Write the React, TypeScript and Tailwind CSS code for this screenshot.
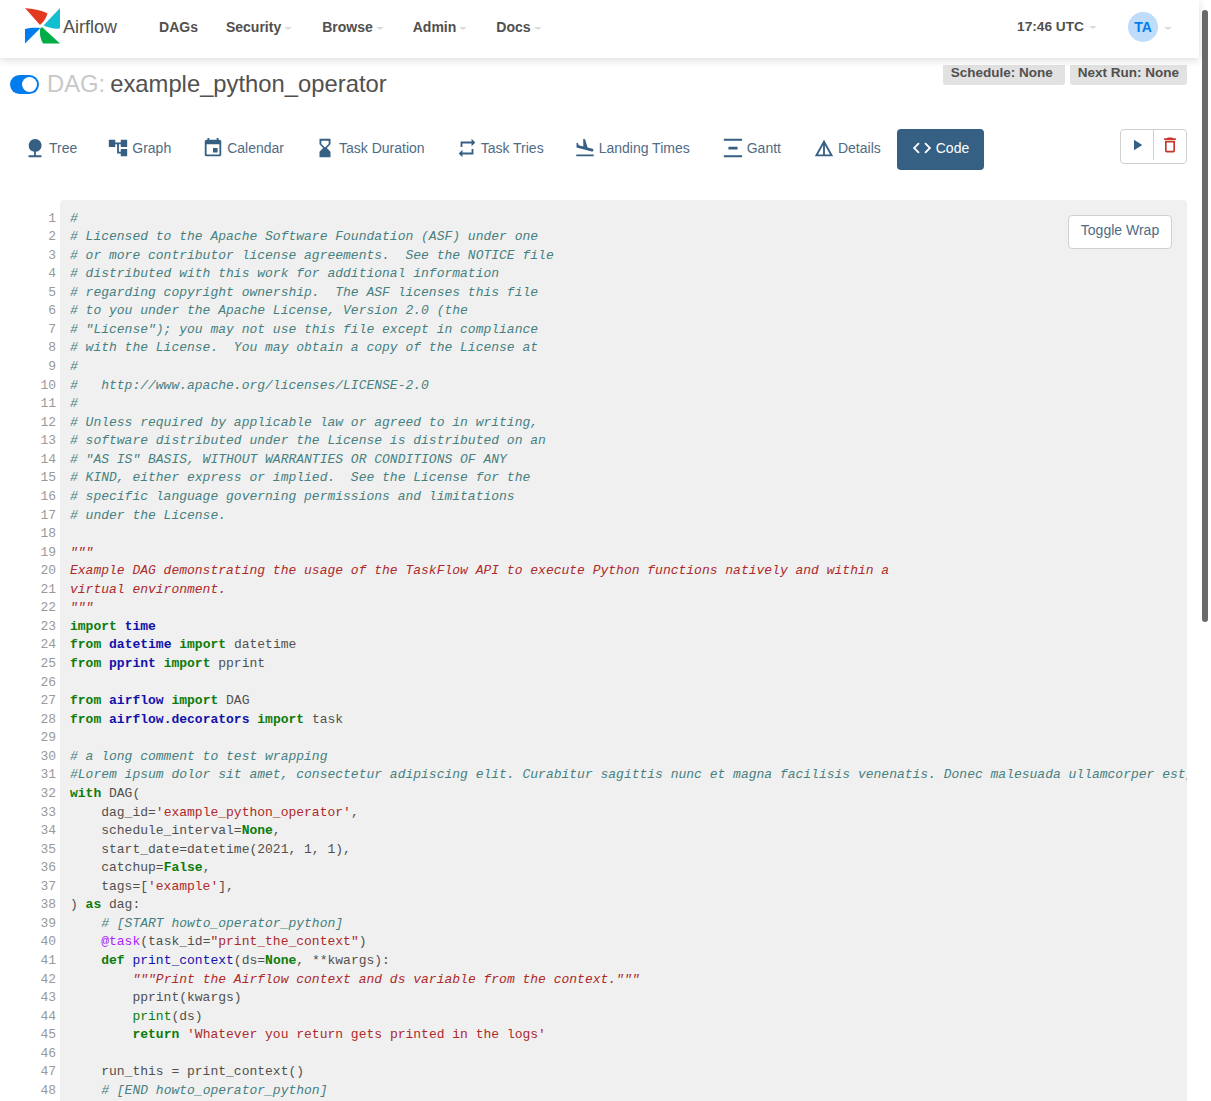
import type { ReactNode } from 'react';
import {
  MdAccountTree,
  MdCode,
  MdDeleteOutline,
  MdDetails,
  MdEvent,
  MdFlightLand,
  MdHourglassBottom,
  MdNature,
  MdPlayArrow,
  MdRepeat,
} from 'react-icons/md';

type Kind = 'c' | 'k' | 'n' | 's' | 'd' | 'f' | 'b' | 'a' | 't';
type Token = [Kind, string];

const tokenClass: Record<Kind, string> = {
  c: 'italic text-[#468080]',
  k: 'font-bold text-[#0c7c0c]',
  n: 'font-bold text-[#1111aa]',
  s: 'text-[#ad2a2a]',
  d: 'italic text-[#ad2a2a]',
  f: 'text-[#1111aa]',
  b: 'text-[#0c7c0c]',
  a: 'text-[#aa22ff]',
  t: 'text-[#51504f]',
};

const comment = (s: string): Token[] => [['c', s]];

const lines: Token[][] = [
  comment('#'),
  comment('# Licensed to the Apache Software Foundation (ASF) under one'),
  comment('# or more contributor license agreements.  See the NOTICE file'),
  comment('# distributed with this work for additional information'),
  comment('# regarding copyright ownership.  The ASF licenses this file'),
  comment('# to you under the Apache License, Version 2.0 (the'),
  comment('# "License"); you may not use this file except in compliance'),
  comment('# with the License.  You may obtain a copy of the License at'),
  comment('#'),
  comment('#   http://www.apache.org/licenses/LICENSE-2.0'),
  comment('#'),
  comment('# Unless required by applicable law or agreed to in writing,'),
  comment('# software distributed under the License is distributed on an'),
  comment('# "AS IS" BASIS, WITHOUT WARRANTIES OR CONDITIONS OF ANY'),
  comment('# KIND, either express or implied.  See the License for the'),
  comment('# specific language governing permissions and limitations'),
  comment('# under the License.'),
  [],
  [['d', '"""']],
  [['d', 'Example DAG demonstrating the usage of the TaskFlow API to execute Python functions natively and within a']],
  [['d', 'virtual environment.']],
  [['d', '"""']],
  [['k', 'import'], ['t', ' '], ['n', 'time']],
  [['k', 'from'], ['t', ' '], ['n', 'datetime'], ['t', ' '], ['k', 'import'], ['t', ' datetime']],
  [['k', 'from'], ['t', ' '], ['n', 'pprint'], ['t', ' '], ['k', 'import'], ['t', ' pprint']],
  [],
  [['k', 'from'], ['t', ' '], ['n', 'airflow'], ['t', ' '], ['k', 'import'], ['t', ' DAG']],
  [['k', 'from'], ['t', ' '], ['n', 'airflow.decorators'], ['t', ' '], ['k', 'import'], ['t', ' task']],
  [],
  comment('# a long comment to test wrapping'),
  comment('#Lorem ipsum dolor sit amet, consectetur adipiscing elit. Curabitur sagittis nunc et magna facilisis venenatis. Donec malesuada ullamcorper est,'),
  [['k', 'with'], ['t', ' DAG(']],
  [['t', '    dag_id='], ['s', "'example_python_operator'"], ['t', ',']],
  [['t', '    schedule_interval='], ['k', 'None'], ['t', ',']],
  [['t', '    start_date=datetime(2021, 1, 1),']],
  [['t', '    catchup='], ['k', 'False'], ['t', ',']],
  [['t', '    tags=['], ['s', "'example'"], ['t', '],']],
  [['t', ') '], ['k', 'as'], ['t', ' dag:']],
  [['t', '    '], ['c', '# [START howto_operator_python]']],
  [['t', '    '], ['a', '@task'], ['t', '(task_id='], ['s', '"print_the_context"'], ['t', ')']],
  [['t', '    '], ['k', 'def'], ['t', ' '], ['f', 'print_context'], ['t', '(ds='], ['k', 'None'], ['t', ', **kwargs):']],
  [['t', '        '], ['d', '"""Print the Airflow context and ds variable from the context."""']],
  [['t', '        pprint(kwargs)']],
  [['t', '        '], ['b', 'print'], ['t', '(ds)']],
  [['t', '        '], ['k', 'return'], ['t', ' '], ['s', "'Whatever you return gets printed in the logs'"]],
  [],
  [['t', '    run_this = print_context()']],
  [['t', '    '], ['c', '# [END howto_operator_python]']],
];

function Caret() {
  return <span className="ml-[3px] mt-[2px] inline-block h-0 w-0 border-x-[4px] border-t-[3px] border-x-transparent border-t-[#dcdcdc]" />;
}

// pinwheel, coordinates are the page's own
function Logo() {
  return (
    <svg width="40" height="38" viewBox="23 8 40 38" className="shrink-0">
      <path d="M25 8C33 9 41 10 47.500 13.500C46 18 44 21.500 41 24L40 25Z" fill="#e43921" />
      <path d="M60 8V28.500C54 29 49 28 43.500 25.500Z" fill="#11bfd0" />
      <path d="M60 43.500H43C40.500 39 39.500 35 40 29L42 27Z" fill="#00ad46" />
      <path d="M25 43.500V29C30 27.500 35 27.500 40 28L41.500 27Z" fill="#017cee" />
    </svg>
  );
}

function NavItem({ label, className, caret = true }: { label: string; className: string; caret?: boolean }) {
  return (
    <div className={`flex items-center text-[14px] font-bold text-[#51504f] ${className}`}>
      {label}
      {caret && <Caret />}
    </div>
  );
}

function Badge({ children, className = 'pr-2' }: { children: ReactNode; className?: string }) {
  return <span className={`flex h-5 items-start rounded-b-[3px] bg-[#e2e2e2] pl-2 text-[13.500px] font-bold leading-[15px] text-[#51504f] ${className}`}>{children}</span>;
}

function Tab({ icon, label, active, className = '' }: { icon: ReactNode; label: string; active?: boolean; className?: string }) {
  return (
    <div
      className={`flex h-[41px] items-center gap-[5px] rounded-[4px] px-[15px] pb-[3px] text-[14px] ${
        active ? 'bg-[#365f84] text-white' : 'text-[#4f6b85]'
      } ${className}`}
    >
      <span className={`-mx-[2px] flex w-[22px] justify-center text-[22px] ${active ? 'text-white' : 'text-[#365f84]'}`}>{icon}</span>
      {label}
    </div>
  );
}

export default function App() {
  return (
    <div className="flex h-[1101px] overflow-hidden bg-white font-['Liberation_Sans',sans-serif]">
      <div className="min-w-0 flex-1">
        <nav className="relative z-10 flex h-[58px] items-center bg-white pb-1 pl-[23px] pr-[27px] shadow-[0_2px_8px_rgba(0,0,0,0.14)]">
          <Logo />
          <span className="text-[18px] text-[#51504f]">Airflow</span>
          <NavItem label="DAGs" caret={false} className="ml-[42px]" />
          <NavItem label="Security" className="ml-[28px]" />
          <NavItem label="Browse" className="ml-[30px]" />
          <NavItem label="Admin" className="ml-[29px]" />
          <NavItem label="Docs" className="ml-[29px]" />
          <div className="ml-auto flex items-center">
            <div className="mr-[31px] flex items-center text-[13.700px] font-bold text-[#51504f]">
              17:46 UTC
              <span className="ml-[2px] flex"><Caret /></span>
            </div>
            <span className="flex h-[30px] w-[30px] items-center justify-center rounded-full bg-[#bfdcfa] text-[14px] font-bold text-[#017cee]">TA</span>
            <span className="ml-[3px] flex items-center"><Caret /></span>
          </div>
        </nav>

        <div className="flex h-[71px] items-start justify-between pl-[10px] pr-3">
          <h3 className="mt-[11px] flex items-center text-[23.800px] leading-[30px] text-[#51504f]">
            <span className="mr-2 flex h-[19px] w-[29px] items-center justify-end rounded-full bg-[#017cee] pr-[2px]">
              <span className="h-[15px] w-[15px] rounded-full bg-white" />
            </span>
            <span className="mr-[5px] text-[#c8c8c8]">DAG:</span>
            example_python_operator
          </h3>
          <div className="mt-[7px] flex gap-[5px]">
            <Badge className="pr-3">Schedule: None</Badge>
            <Badge>Next Run: None</Badge>
          </div>
        </div>

        <div className="flex items-start pl-[11px] pr-3">
          <div className="flex gap-[2px]">
            <Tab icon={<MdNature />} label="Tree" />
            <Tab icon={<MdAccountTree />} label="Graph" />
            <Tab icon={<MdEvent />} label="Calendar" className="ml-[1px]" />
            <Tab icon={<MdHourglassBottom />} label="Task Duration" />
            <Tab icon={<MdRepeat />} label="Task Tries" className="ml-[1px]" />
            <Tab icon={<MdFlightLand />} label="Landing Times" />
            <Tab
              icon={
                <svg width="22" height="22" viewBox="0 0 24 24" fill="currentColor">
                  <path d="M22 2v2H2V2h20zM7 10.500v3h10v-3H7zM2 20v2h20v-2H2z" />
                </svg>
              }
              label="Gantt"
              className="ml-[2px]"
            />
            <Tab icon={<MdDetails />} label="Details" className="ml-[2px]" />
            <Tab icon={<MdCode />} label="Code" active className="-ml-[1px] pl-[16px]" />
          </div>
          <div className="ml-auto flex h-[35px] rounded-[4px] border border-[#cfcfcf] pb-[3px]">
            <span className="flex w-[33px] items-center justify-center border-r border-[#cfcfcf] text-[18px] text-[#365f84]"><MdPlayArrow /></span>
            <span className="flex w-[32px] items-center justify-center text-[20px] text-[#c9362b]"><MdDeleteOutline /></span>
          </div>
        </div>

        <div className="mt-[30px] flex pr-3">
          <div className="w-[56px] shrink-0 pt-[9.500px] text-right font-['Liberation_Mono',monospace] text-[13px] leading-[18.570px] text-[#999]">
            {lines.map((_, i) => (
              <div key={i} className="h-[18.570px]">{i + 1}</div>
            ))}
          </div>
          <div className="ml-1 min-h-[920px] min-w-0 flex-1 overflow-hidden rounded-[4px] bg-[#f0f0f0] pl-[10px] pt-[9.500px]">
            <div className="float-right mr-[15px] mt-[5.500px] flex h-[34px] w-[104px] items-center justify-center rounded-[4px] border border-[#cfcfcf] bg-white pb-[3px] text-[14px] text-[#4f6b85]">
              Toggle Wrap
            </div>
            <pre className="font-['Liberation_Mono',monospace] text-[13px] leading-[18.570px]">
              {lines.map((line, i) => (
                <div key={i} className="h-[18.570px]">
                  {line.map(([kind, text], j) => (
                    <span key={j} className={tokenClass[kind]}>{text}</span>
                  ))}
                </div>
              ))}
            </pre>
          </div>
        </div>
      </div>

      <div className="w-3 shrink-0 bg-white pl-[3px] pt-[10px]">
        <div className="h-[612px] w-[6px] rounded-[3px] bg-[#6b6b6b]" />
      </div>
    </div>
  );
}
